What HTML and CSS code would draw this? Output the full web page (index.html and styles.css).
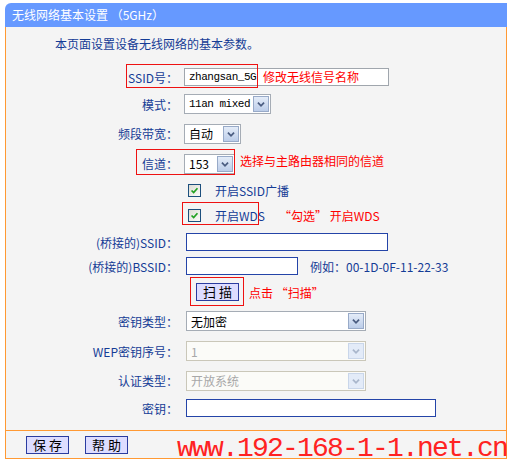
FILE: index.html
```html
<!DOCTYPE html>
<html lang="zh-CN">
<head>
    <meta charset="UTF-8">
    <title>无线网络基本设置</title>
    <link rel="stylesheet" href="styles.css">
</head>
<body>
    <div class="panel">
        <div class="title">无线网络基本设置 （5GHz）</div>
        <div class="box">
            <div class="content">
                <p class="intro">本页面设置设备无线网络的基本参数。</p>
                <div class="form">
                    <div class="label">SSID号：</div>
                    <div class="ctrl">
                        <div class="input grey w-ssid"><span class="mono">zhangsan_5G</span></div>
                        <span class="note note-ssid">修改无线信号名称</span>
                    </div>

                    <div class="label">模式：</div>
                    <div class="ctrl">
                        <div class="sel w-mode"><span class="val mono">11an mixed</span><span class="arrow"><svg viewBox="0 0 16 16"><path d="M4.5 6.5 L8 10 L11.5 6.5"/></svg></span></div>
                    </div>

                    <div class="label">频段带宽：</div>
                    <div class="ctrl">
                        <div class="sel w-band"><span class="val">自动</span><span class="arrow"><svg viewBox="0 0 16 16"><path d="M4.5 6.5 L8 10 L11.5 6.5"/></svg></span></div>
                    </div>

                    <div class="label">信道：</div>
                    <div class="ctrl">
                        <div class="sel w-chan"><span class="val">153</span><span class="arrow"><svg viewBox="0 0 16 16"><path d="M4.5 6.5 L8 10 L11.5 6.5"/></svg></span></div>
                        <span class="note note-chan">选择与主路由器相同的信道</span>
                    </div>

                    <div class="label"></div>
                    <div class="ctrl">
                        <span class="check"><svg viewBox="0 0 13 13"><path d="M3 6.5 L5.5 9 L10 3.8"/></svg></span>
                        <span class="check-text">开启SSID广播</span>
                    </div>

                    <div class="label"></div>
                    <div class="ctrl">
                        <span class="check"><svg viewBox="0 0 13 13"><path d="M3 6.5 L5.5 9 L10 3.8"/></svg></span>
                        <span class="check-text">开启WDS</span>
                        <span class="note note-wds">“勾选” 开启WDS</span>
                    </div>

                    <div class="label">(桥接的)SSID：</div>
                    <div class="ctrl">
                        <div class="input blue shift w-long"></div>
                    </div>

                    <div class="label">(桥接的)BSSID：</div>
                    <div class="ctrl">
                        <div class="input blue shift w-bssid"></div>
                        <span class="hint">例如：00-1D-0F-11-22-33</span>
                    </div>

                    <div class="label"></div>
                    <div class="ctrl">
                        <button class="btn scan">扫 描</button>
                        <span class="note note-scan">点击 “扫描”</span>
                    </div>

                    <div class="label">密钥类型：</div>
                    <div class="ctrl">
                        <div class="sel shift w-wide"><span class="val">无加密</span><span class="arrow"><svg viewBox="0 0 16 16"><path d="M4.5 6.5 L8 10 L11.5 6.5"/></svg></span></div>
                    </div>

                    <div class="label">WEP密钥序号：</div>
                    <div class="ctrl">
                        <div class="sel off shift w-wide"><span class="val">1</span><span class="arrow"><svg viewBox="0 0 16 16"><path d="M4.5 6.5 L8 10 L11.5 6.5"/></svg></span></div>
                    </div>

                    <div class="label">认证类型：</div>
                    <div class="ctrl">
                        <div class="sel off shift w-wide"><span class="val">开放系统</span><span class="arrow"><svg viewBox="0 0 16 16"><path d="M4.5 6.5 L8 10 L11.5 6.5"/></svg></span></div>
                    </div>

                    <div class="label">密钥：</div>
                    <div class="ctrl">
                        <div class="input blue shift w-key"></div>
                    </div>
                </div>
            </div>
            <div class="foot">
                <button class="btn">保 存</button>
                <button class="btn">帮 助</button>
            </div>
        </div>

        <!-- red marks drawn over the form -->
        <div class="mark mark-ssid"></div>
        <div class="mark mark-chan"></div>
        <div class="mark mark-wds"></div>
        <div class="mark mark-scan"></div>
        <div class="watermark">www.192-168-1-1.net.cn</div>
    </div>
</body>
</html>
```

FILE: styles.css
```css
body {
    margin: 0;
    padding: 3px 0 0 5px;
    background: #fff;
    font-family: "Noto Sans CJK SC", "Liberation Sans", sans-serif;
    font-size: 12px;
    color: #143c96;
}
.panel {
    position: relative;
    width: 502px;
}
.title {
    height: 24px;
    line-height: 24px;
    padding-left: 7px;
    background-color: #6699ff;
    color: #fff;
    border-radius: 6px 0 0 0;
}
.box {
    border: 1px solid #ff9933;
    border-top: none;
    background-color: #f4f4f4;
}
.content {
    padding: 10px 0 7px 0;
}
.intro {
    margin: 0 0 13px 49px;
    line-height: 14px;
}
.form {
    display: grid;
    grid-template-columns: 172px 1fr;
    grid-template-rows: 26px 28px 31px 29px 25px 25px 28px 20px 32px 26px 34px 25px 30px;
    column-gap: 6px;
}
.label {
    display: flex;
    align-items: center;
    justify-content: flex-end;
    white-space: nowrap;
}
.ctrl {
    display: flex;
    align-items: center;
    position: relative;
}
.shift { margin-left: 2px; }

.mono {
    font-family: "Liberation Mono", monospace;
    font-size: 11px;
    letter-spacing: -0.5px;
    color: #000;
}

/* text fields */
.input {
    height: 18px;
    box-sizing: border-box;
    background: #fff;
    display: flex;
    align-items: center;
    padding-left: 4px;
}
.input.grey { border: 1px solid #a0a6ad; }
.input.blue { border: 1px solid #2444a8; }
.w-ssid { width: 205px; }
.w-long { width: 202px; }
.w-bssid { width: 112px; }
.w-key { width: 250px; }

/* drop downs */
.sel {
    height: 20px;
    box-sizing: border-box;
    border: 1px solid #a5acb5;
    background: #fff;
    display: flex;
    align-items: center;
    justify-content: space-between;
}
.sel .val {
    padding-left: 4px;
    color: #000;
}
.sel .arrow {
    width: 16px;
    height: 16px;
    margin-right: 1px;
    box-sizing: border-box;
    border: 1px solid #98aac8;
    background: linear-gradient(#e4ecf8, #bccde9);
}
.sel .arrow svg {
    display: block;
    width: 14px;
    height: 14px;
    fill: none;
    stroke: #4a5c80;
    stroke-width: 2;
}
.sel.off {
    border-color: #cac7b9;
    background: #fbfbf8;
}
.sel.off .val { color: #a8a8a8; }
.sel.off .arrow {
    border-color: #c9d6ea;
    background: #e3ebf8;
}
.sel.off .arrow svg { stroke: #a9b6cb; }
.w-mode { width: 87px; }
.w-band { width: 57px; }
.w-chan { width: 51px; }
.w-wide { width: 180px; }

/* checkboxes */
.check {
    width: 13px;
    height: 13px;
    box-sizing: border-box;
    margin-left: 4px;
    border: 1px solid #1c4f7d;
    background: linear-gradient(135deg, #dcdcd4, #fbfbf8);
}
.check svg {
    display: block;
    width: 11px;
    height: 11px;
    fill: none;
    stroke: #21a121;
    stroke-width: 2;
}
.check-text { margin-left: 14px; }

.hint { margin-left: 12px; }

/* red notes */
.note { color: #ff0000; }
.note-ssid {
    position: absolute;
    left: 79px;
    top: 4px;
}
.note-chan {
    margin-left: 5px;
    margin-bottom: 7px;
}
.note-wds { margin-left: 14px; }
.note-scan { margin-left: 10px; }

.btn {
    height: 18px;
    padding: 0;
    width: 43px;
    box-sizing: border-box;
    border: 1px solid #2a3ca0;
    background-color: #ddddff;
    color: #000;
    font-family: "Noto Sans CJK SC", sans-serif;
    font-size: 13px;
    line-height: 16px;
}
.btn.scan { margin-left: 12px; }

.foot {
    border-top: 1px solid #ff9933;
    height: 28px;
    box-sizing: border-box;
    padding: 5px 0 0 20px;
    display: flex;
    align-items: flex-start;
    gap: 16px;
}

.mark {
    position: absolute;
    border: 1px solid #ee1111;
}
.mark-ssid { left: 121px; top: 61px; width: 130px; height: 22px; }
.mark-chan { left: 131px; top: 146px; width: 97px; height: 24px; }
.mark-wds { left: 177px; top: 199px; width: 75px; height: 21px; }
.mark-scan { left: 185px; top: 274px; width: 52px; height: 27px; }

.watermark {
    position: absolute;
    left: 172px;
    top: 432px;
    font-family: "Liberation Mono", monospace;
    font-size: 28px;
    line-height: 28px;
    letter-spacing: -1.8px;
    color: #ff2222;
    white-space: nowrap;
}
```
